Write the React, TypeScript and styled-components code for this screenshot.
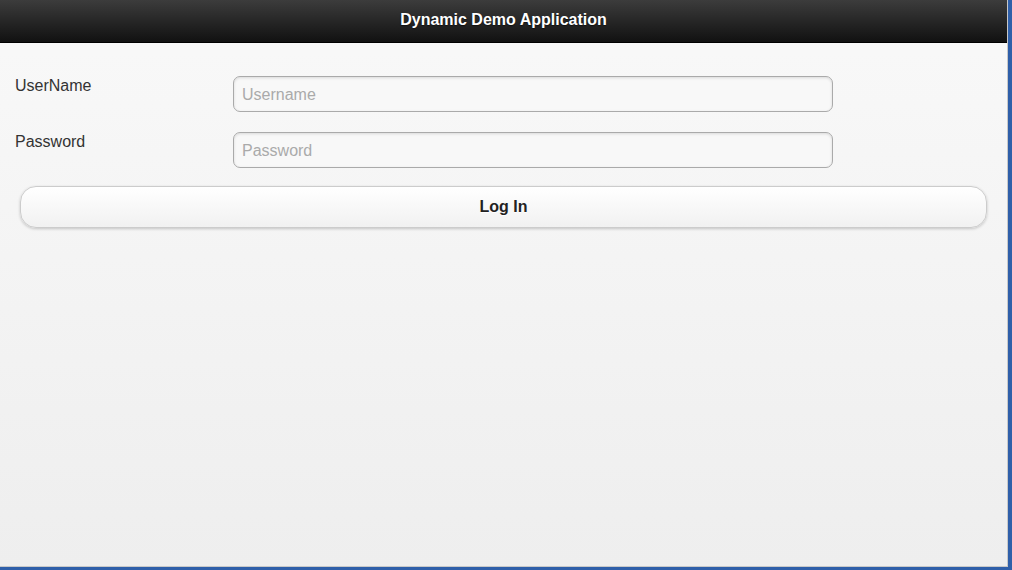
import React from 'react';
import styled, { createGlobalStyle } from 'styled-components';

const GlobalStyle = createGlobalStyle`
  html, body {
    margin: 0;
    padding: 0;
    background: #ffffff;
    font-family: "Liberation Sans", Arial, sans-serif;
  }
`;

// Outer window frame with the blue edge on the right and bottom
const Frame = styled.div`
  width: 1012px;
  height: 570px;
  box-sizing: border-box;
  border-right: 4px solid #2f5fa9;
  border-bottom: 3px solid #2f5fa9;
  display: flex;
`;

const Page = styled.div`
  flex: 1;
  display: flex;
  flex-direction: column;
  border-right: 1px solid #c8c8c8;
  border-bottom: 1px solid #c8c8c8;
  background: linear-gradient(#f9f9f9, #eeeeee);
`;

const Header = styled.header`
  height: 42px;
  flex: none;
  display: flex;
  align-items: center;
  justify-content: center;
  background: linear-gradient(#3c3c3c, #111111);
  border-bottom: 1px solid #000;
`;

const Title = styled.h1`
  margin: 0 0 2px;
  font-size: 16px;
  font-weight: bold;
  color: #ffffff;
  text-shadow: 0 1px 1px #111;
`;

const Content = styled.main`
  padding: 33px 20px 0 15px;
  display: flex;
  flex-direction: column;
`;

const Form = styled.div`
  display: grid;
  grid-template-columns: 218px 600px;
  row-gap: 20px;
`;

const Label = styled.label`
  font-size: 16px;
  color: #333333;
  line-height: 18px;
  padding-top: 1px;
`;

const Input = styled.input`
  box-sizing: border-box;
  height: 36px;
  width: 100%;
  margin: 0;
  padding: 2px 8px 0;
  font-family: "Liberation Sans", Arial, sans-serif;
  font-size: 16px;
  color: #333;
  background: #f8f8f8;
  border: 1px solid #aaaaaa;
  border-radius: 7px;
  box-shadow: inset 0 1px 3px rgba(0, 0, 0, 0.12);
  outline: none;

  &::placeholder {
    color: #aaaaaa;
  }
`;

const Button = styled.button`
  box-sizing: border-box;
  margin: 18px 0 0 5px;
  width: 967px;
  height: 42px;
  font-family: "Liberation Sans", Arial, sans-serif;
  font-size: 16px;
  font-weight: bold;
  color: #222222;
  text-shadow: 0 1px 0 #fff;
  background: linear-gradient(#ffffff, #f1f1f1);
  border: 1px solid #cccccc;
  border-radius: 16px;
  box-shadow: 0 1px 3px rgba(0, 0, 0, 0.2);
  cursor: pointer;
`;

const App: React.FC = () => (
  <>
    <GlobalStyle />
    <Frame>
      <Page>
        <Header>
          <Title>Dynamic Demo Application</Title>
        </Header>
        <Content>
          <Form>
            <Label htmlFor="username">UserName</Label>
            <Input id="username" placeholder="Username" />
            <Label htmlFor="password">Password</Label>
            <Input id="password" type="password" placeholder="Password" />
          </Form>
          <Button>Log In</Button>
        </Content>
      </Page>
    </Frame>
  </>
);

export default App;
